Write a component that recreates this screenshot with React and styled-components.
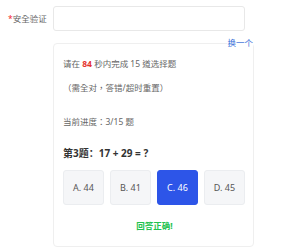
import React from "react";
import styled, { createGlobalStyle } from "styled-components";

const Global = createGlobalStyle`
  html, body { margin: 0; padding: 0; background: #fff; }
  body { font-family: "Noto Sans", "Noto Sans CJK TC", sans-serif; color: #666; }
  * { box-sizing: border-box; }
`;

const Page = styled.div`
  width: 300px;
  height: 250px;
  padding: 6px 0 0 8px;
  display: flex;
  flex-direction: column;
`;

const FormRow = styled.div`
  display: flex;
  align-items: center;
`;

const Label = styled.label`
  width: 45px;
  font-size: 8.5px;
  line-height: 12px;
  color: #666;
  white-space: nowrap;
`;

const Star = styled.span`
  color: #f5222d;
`;

const Input = styled.div`
  width: 192px;
  height: 25px;
  border: 1px solid #e8e8e8;
  border-radius: 3px;
  background: #fff;
`;

const Card = styled.div`
  position: relative;
  margin: 12px 0 0 45px;
  width: 201px;
  border: 1px solid #efefef;
  border-radius: 4px;
  padding: 14px 7px 14px 9px;
  display: flex;
  flex-direction: column;
`;

const SwapLink = styled.a`
  position: absolute;
  top: -7px;
  right: 0;
  font-size: 8.5px;
  line-height: 12px;
  color: #3b6fd8;
  background: #fff;
  cursor: pointer;
`;

const Line = styled.p`
  margin: ${(p) => p.$mt || 0}px 0 0;
  font-size: 8.5px;
  line-height: 12px;
  color: #666;
  white-space: nowrap;
`;

const Hot = styled.b`
  color: #e5322d;
  font-weight: 700;
`;

const Question = styled.div`
  margin-top: 18px;
  font-family: "Noto Sans", "Noto Sans CJK SC", sans-serif;
  font-size: 10px;
  line-height: 14px;
  font-weight: 700;
  color: #333;
`;

const Options = styled.div`
  margin-top: 10px;
  display: grid;
  grid-template-columns: repeat(4, 41px);
  column-gap: 6px;
`;

const Option = styled.button`
  height: 35px;
  padding: 0;
  border-radius: 3px;
  border: 1px solid ${(p) => (p.$active ? "#2d55e8" : "#ebedf0")};
  background: ${(p) => (p.$active ? "#2d55e8" : "#f5f6f8")};
  color: ${(p) => (p.$active ? "#fff" : "#555")};
  font-family: "Noto Sans", "Noto Sans CJK SC", sans-serif;
  font-size: 9px;
  cursor: pointer;
`;

const Result = styled.div`
  margin-top: 15px;
  text-align: center;
  font-size: 8.5px;
  line-height: 12px;
  font-weight: 700;
  color: #22c24f;
`;

const options = [
  { key: "A", val: 44 },
  { key: "B", val: 41 },
  { key: "C", val: 46, active: true },
  { key: "D", val: 45 },
];

export default function App() {
  return (
    <>
      <Global />
      <Page>
        <FormRow>
          <Label>
            <Star>*</Star>安全验证
          </Label>
          <Input />
        </FormRow>
        <Card>
          <SwapLink>换一个</SwapLink>
          <Line>
            请在 <Hot>84</Hot> 秒内完成 15 道选择题
          </Line>
          <Line $mt={12}>（需全对，答错/超时重置）</Line>
          <Line $mt={22}>当前进度：3/15 题</Line>
          <Question>第3题：17 + 29 = ?</Question>
          <Options>
            {options.map((o) => (
              <Option key={o.key} $active={o.active}>
                {o.key}. {o.val}
              </Option>
            ))}
          </Options>
          <Result>回答正确!</Result>
        </Card>
      </Page>
    </>
  );
}
